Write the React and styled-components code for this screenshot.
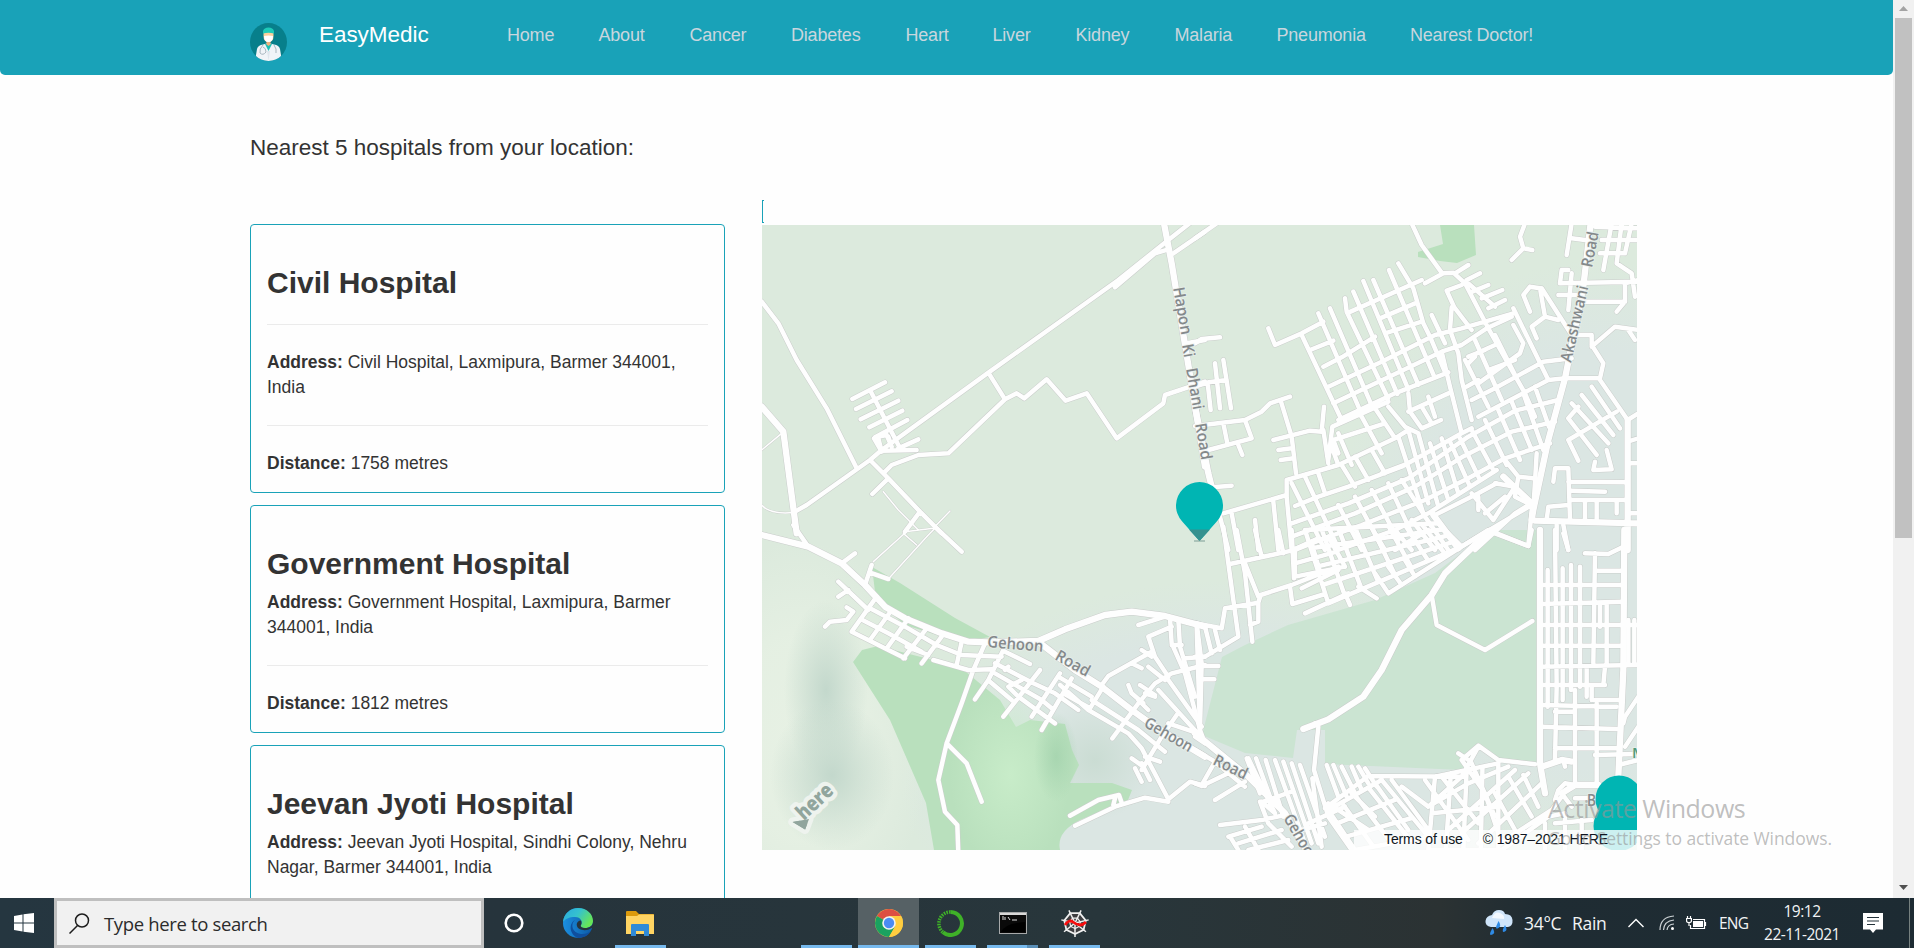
import React from "react";
import styled, { createGlobalStyle } from "styled-components";

const GlobalStyle = createGlobalStyle`
  *, *::before, *::after { box-sizing: border-box; }
  html, body { margin: 0; padding: 0; }
  body { background: #fff; overflow: hidden; }
`;

const SANS = `"Liberation Sans", Arial, sans-serif`;
const SYSTEM = `"Open Sans", "Noto Sans", sans-serif`;
const TEAL = "#19a2b8";

const Screen = styled.div`
  position: relative;
  display: flex;
  flex-direction: column;
  width: 1914px;
  height: 948px;
  overflow: hidden;
  font-family: ${SANS};
  color: #333;
`;

const Viewport = styled.div`
  display: flex;
  flex: 1;
  min-height: 0;
`;

const Page = styled.div`
  flex: 1;
  min-width: 0;
  overflow: hidden;
  background: #fefefe;
`;

const Navbar = styled.nav`
  display: flex;
  align-items: flex-start;
  height: 75px;
  padding-left: 250px;
  background: ${TEAL};
  border-radius: 0 0 5px 5px;
`;

const Logo = styled.svg`
  width: 37px;
  height: 38px;
  margin-top: 23px;
`;

const Brand = styled.span`
  width: 188px;
  margin: 22px 0 0 32px;
  font-size: 22.5px;
  line-height: 26px;
  letter-spacing: -0.05px;
  color: #fff;
`;

const NavLinks = styled.div`
  display: flex;
  margin-top: 25px;
`;

const NavLink = styled.a`
  flex: none;
  width: ${(p) => p.$width}px;
  font-size: 18px;
  line-height: 21px;
  letter-spacing: -0.2px;
  white-space: nowrap;
  color: #c9d6de;
`;

const Heading = styled.h4`
  margin: 59px 0 0 250px;
  font-size: 22.5px;
  font-weight: 400;
  line-height: 28px;
`;

const Columns = styled.div`
  display: flex;
  align-items: flex-start;
  gap: 37px;
  margin: 38px 0 0 250px;
`;

const CardList = styled.div`
  display: flex;
  flex-direction: column;
  gap: 12px;
  width: 475px;
  margin-top: 24px;
`;

const Card = styled.article`
  padding: 40px 16px 16px;
  border: 1px solid ${TEAL};
  border-radius: 4px;
`;

const CardTitle = styled.h3`
  margin: 0 0 ${(p) => (p.$ruled ? 24 : 9)}px;
  font-size: 30px;
  font-weight: 700;
  line-height: 35px;
`;

const Rule = styled.hr`
  height: 1px;
  margin: ${(p) => (p.$first ? 0 : 25)}px 0 25px;
  border: 0;
  background: #ebebeb;
`;

const CardText = styled.p`
  margin: 0;
  font-size: 17.5px;
  line-height: 25px;
`;

const MapColumn = styled.div`
  display: flex;
  flex-direction: column;
  gap: 2px;
  width: 875px;
`;

const EmptyPanel = styled.div`
  width: 2px;
  height: 23px;
  border: 1px solid ${TEAL};
  border-right: 0;
`;

const MapFrame = styled.div`
  position: relative;
  width: 875px;
  height: 625px;
  overflow: hidden;

  > svg { display: block; }
`;

const MapCredits = styled.div`
  position: absolute;
  right: 0;
  bottom: 0;
  display: flex;
  gap: 20px;
  width: 283px;
  height: 20px;
  padding-left: 30px;
  background: rgba(255, 255, 255, 0.8);
  font-size: 14px;
  line-height: 19px;
  letter-spacing: -0.12px;
  white-space: nowrap;
  color: #0f1621;
`;

const ScrollTrack = styled.div`
  display: flex;
  flex-direction: column;
  justify-content: space-between;
  align-items: center;
  width: 21px;
  background: #f1f1f1;

  > svg { flex: none; display: block; }
`;

const ScrollThumb = styled.div`
  width: 17px;
  height: 520px;
  margin-bottom: auto;
  background: #c1c1c1;
`;

const Watermark = styled.div`
  position: absolute;
  left: 1548px;
  top: 791px;
  font-family: ${SYSTEM};
  white-space: nowrap;
  color: rgba(150, 150, 150, 0.62);
`;

const WatermarkTitle = styled.div`
  font-size: 25px;
  line-height: 35px;
  letter-spacing: -0.5px;
`;

const WatermarkNote = styled.div`
  font-size: 17.5px;
  line-height: 25px;
  letter-spacing: -0.08px;
`;

const Taskbar = styled.footer`
  display: flex;
  align-items: stretch;
  height: 50px;
  flex: none;
  background: linear-gradient(90deg, #253640 0, #26343c 500px, #28363b 1100px, #2b3233 1440px, #1f2c33 1540px, #1d2b33 100%);
  font-family: ${SYSTEM};
  color: #f2f4f5;
`;

const StartButton = styled.div`
  display: flex;
  align-items: center;
  width: 54px;
  padding-left: 14px;
`;

const SearchBox = styled.div`
  display: flex;
  align-items: center;
  gap: 14px;
  width: 430px;
  padding-left: 12px;
  border: 3px solid #bfbfbf;
  background: #f1f1f1;
  font-size: 18.5px;
  letter-spacing: -0.35px;
  color: #2b2b2b;
`;

const TaskButton = styled.div`
  display: flex;
  align-items: center;
  justify-content: center;
  width: ${(p) => p.$width}px;
  margin-left: ${(p) => p.$gap || 0}px;
  padding-top: 3px;
  background: ${(p) => (p.$active ? "#566165" : "transparent")};
  border-bottom: 3px solid ${(p) => (p.$open ? "#76b9ed" : "transparent")};
  ${(p) => p.$stacked && "border-image: linear-gradient(90deg, #76b9ed 40px, #5a8fb8 40px) 0 0 3 0;"}
`;

const Tray = styled.div`
  display: flex;
  align-items: center;
  margin-left: auto;
`;

const TrayItem = styled.div`
  display: flex;
  align-items: center;
  width: ${(p) => p.$width}px;
  font-size: ${(p) => p.$size || 16}px;
  letter-spacing: ${(p) => p.$track || 0}px;
  white-space: nowrap;
`;

const Clock = styled.div`
  width: 106px;
  padding-right: 16px;
  font-size: 15.5px;
  line-height: 23px;
  letter-spacing: -0.5px;
  text-align: center;
`;

const ShowDesktop = styled.div`
  width: 5px;
  height: 50px;
  border-left: 1px solid #76807f;
`;

/* Builds a street grid inside a quadrilateral given clockwise from its top left corner. */
const grid = ([a, b, c, d], rows, cols) => {
  const mix = (p, q, t) => [p[0] + (q[0] - p[0]) * t, p[1] + (q[1] - p[1]) * t];
  const seg = (p, q) => `M${p.map((n) => n.toFixed(1))}L${q.map((n) => n.toFixed(1))}`;
  let out = "";
  for (let i = 0; i < rows; i += 1) {
    const t = rows > 1 ? i / (rows - 1) : 0;
    out += seg(mix(a, d, t), mix(b, c, t));
  }
  for (let i = 0; i < cols; i += 1) {
    const t = cols > 1 ? i / (cols - 1) : 0;
    out += seg(mix(a, b, t), mix(d, c, t));
  }
  return out;
};

const SECTORS = [
  {
    id: "northwest",
    at: [755, 190],
    wide: "M20 650L85 725L125 1030M1225 90L1250 220L1350 830",
    streets: `M20 335L70 400L125 510L215 655L305 835M120 965L155 945L345 810L380 780L700 548L1090 270L1240 150L1310 95
      M1080 292L1200 190L1240 178M1255 190L1350 125M700 548L750 628L580 790L490 795L410 825L385 850
      M750 628L785 610L808 625L875 568L932 632L995 610L1085 745L1225 640L1230 615L1350 575
      M345 810L400 865L495 965L560 1030M400 865L352 912M495 965L450 1025M1295 460L1350 450
      M345 600L435 775M292 627L390 577M303 657L410 604M317 688L430 632M343 712L442 662M360 742L457 690M370 745L380 785M357 745L380 785M400 740L410 770
      M430 775L490 748M380 782L485 780M360 742L395 735L410 770`,
    thin: "M20 780L80 730M20 945Q45 975 120 967M385 905L430 960L490 1020M585 963L535 1015L450 1025",
  },
  {
    id: "northeast",
    at: [1195, 220],
    wide: `M1188 0L1165 200L1110 475L1060 660L1015 870L1010 900M1020 902L1330 910M715 885L790 985M925 770L1010 850M0 560L40 760L50 800
      M1298 600L1298 990`,
    streets: `M0 55L65 10M650 10L680 75L740 158M690 190L745 160L775 158L810 190L880 325L990 520L1020 590
      M780 160L820 135M815 180L855 160M832 215L880 195M860 235L922 210M880 265L930 240M820 190L900 260
      M755 212L800 195M755 212L778 262L830 330M770 262L765 330L790 400L800 480L830 600
      M220 325L240 375L320 340L385 305
      M320 345L440 600M370 280L495 571M405 265L530 556M450 235L455 275L579 535M475 215L607 522M505 183L640 508M535 180L670 494M582 150L719 473M610 130L655 205L685 310L705 350L751 459M710 285L750 370
      M460 278L680 180M555 295L660 250M570 340L680 305M345 390L415 362M385 440L440 412L540 350M400 500L560 425L720 345L800 325L955 280M415 550L600 462L740 395L800 375L875 325L950 290M430 600L600 520L760 457
      M955 265L1060 480M820 410L870 390M845 400L900 375M840 360L920 540M810 420L840 480L880 560M850 490L975 400L985 370L955 315M900 345L965 475
      M830 540L900 505L1045 425L1130 415M850 590L1060 480L1110 475M815 500L850 480M820 430L840 410M800 640L830 625M880 450L960 420
      M740 395L765 500L800 640M640 575L760 520M640 520L645 575L680 625L738 600M580 560L630 620L670 640M680 560L710 610M700 530L720 590
      M1005 200L985 225L1005 275M1005 200L1035 205L1050 290L1010 320L1025 355M1040 205L1130 345M1050 290L1090 300
      M950 120L985 85L975 50L990 10M985 85L1012 90
      M1130 10L1115 105M1130 55L1170 60M1100 150L1095 190L1330 185M1100 150L1120 150M1130 160L1120 270M1090 225L1150 225M1170 245L1290 245L1290 190L1330 180
      M1220 60L1330 60M1215 100L1290 100M1250 10L1225 150M1280 10L1265 130L1310 160L1320 230M1310 10L1290 100M1200 20L1330 25M1290 245L1265 275
      M1130 345L1190 345L1190 380L1260 320L1330 330M1190 375L1225 430L1215 475L1110 475M1215 480L1298 600L1330 580M1300 330L1320 360
      M1130 550L1240 670M1160 525L1255 645M1190 500L1275 625M1120 595L1205 705M1120 660L1150 722M1120 660L1265 575M1120 595L1150 560M1195 750L1250 748L1235 690M1200 725L1195 750M1298 665L1330 655
      M1075 785L1080 745L1120 745L1125 900M1120 785L1298 787M1130 812L1230 815M1055 900L1060 860L1120 855M1130 840L1298 840M1170 840L1170 900M1205 845L1205 900M1265 840L1265 880
      M1085 915L1085 990M1105 915L1120 990M1300 880L1330 880M1300 730L1330 730
      M0 370L20 357L75 352M0 500L40 487L95 480M60 430L75 565M85 420L108 565M38 490L47 570M0 618L150 600L200 575L225 550L285 530
      M150 600L170 655L40 690M85 610L97 670M130 675L142 705M258 545L290 650L303 760M235 660L345 632L380 635L387 560M385 630L400 730M250 690L290 685M257 720L295 715
      M50 802L110 797M85 880L275 825M275 780L275 830L290 990M275 780L430 735L600 655L640 630M235 845L250 990M75 890L100 990M110 880L130 990M180 900L190 990
      M400 720L412 620L580 545M430 700L415 660L570 610M430 640L470 735M500 590L560 700M540 565L600 655M410 680L430 735
      M800 640L620 740L460 800L370 830L300 858M1090 540L960 572L820 650L640 775L460 850L290 910M1080 605L950 635L800 712L660 800L480 880L290 950
      M1065 670L930 715L820 775L690 840L500 915L290 990M905 750L700 880L600 930L430 990M600 990L700 930M1025 700L1015 870M970 770L1015 775
      M1020 500L1062 620M985 520L1045 690M950 545L1010 690M910 570L975 720M870 600L935 735M830 630L895 750M795 655L855 780M765 665L825 800M740 655L790 820M705 670L760 840M670 640L730 860M640 630L700 850M610 650L685 880
      M440 735L480 800M480 710L520 780M530 690L570 760M290 790L390 990M330 770L430 985M370 760L390 820M430 855L500 990M480 830L560 980M530 810L610 960M580 790L650 940M620 780L710 920M560 760L640 730
      M790 985L1010 855M720 885L850 820L905 790M830 820L895 900M850 870L850 830M895 900L960 800L900 790M870 880L930 830M900 940L1000 978L1010 870M930 720L970 770L960 830L1000 850M840 990L960 880L1010 850
      M650 900L720 990M690 890L760 990M600 930L650 990M540 940L570 990`,
    thin: "",
  },
  {
    id: "southwest",
    at: [755, 530],
    wide: "M20 15L160 50L260 100L330 165L390 230L450 265L560 310L640 335L700 337L850 333L930 298L1050 255L1130 245L1230 258L1350 290M850 335L960 420L1040 470L1130 540L1200 590L1350 680",
    streets: `M115 -15L160 50M260 100L300 70M330 165L350 105M345 128L400 147M545 -5L620 65M250 155L340 240M250 200L280 180
      M210 290L225 275L275 270L295 245L275 232M345 235L450 290L545 345L620 375L740 380M318 268L400 310L500 365M290 305L450 385M535 390L640 420L710 418
      M365 200L290 305M410 240L345 330M460 265L395 355M515 295L445 385M560 320L500 400M620 335L605 405M690 340L655 420M745 360L700 450L660 508
      M655 420L620 520L575 640L550 750L570 845L607 885L610 970M575 640L635 700L680 815M455 350L520 375
      M750 365L825 402M720 400L835 460L900 490L970 540M720 430L860 510L890 535M705 455L770 510M855 420L745 560M915 430L830 560M950 445L860 600M760 410L750 420M800 450L760 470L790 500L900 580
      M910 440L1010 500M915 465L1000 540L1120 610L1160 655L1240 808M925 490L1005 535M1005 535L1045 470M1010 510L1150 600L1230 665M1240 808L1305 755L1350 768M1240 815L1170 803L1080 830L960 887
      M945 857L1030 810L1092 795L1100 818M1080 805L1075 825M1072 625L1150 520L1200 460L1250 430L1350 405M1040 465L1060 438L1190 365M1150 285L1230 260
      M1250 290L1180 320L1200 380L1240 440M1245 265L1250 340L1290 430L1335 600M1270 270L1275 350L1320 500M1325 280L1340 400L1335 600L1350 640M1210 480L1330 612M1240 450L1340 590M1150 510L1180 540M1170 490L1200 500
      M1290 385L1350 380M1130 400L1160 415M1160 360L1190 380M1180 410L1230 450M1120 465L1130 490L1165 520M1155 465L1200 495M1250 345L1280 345M1220 620L1265 555M1240 580L1330 610M1220 620L1160 720M1130 685L1165 710M1140 715L1160 755M1160 700L1185 750
      M1130 540L1220 600M1170 680L1215 695M1320 620L1350 640`,
    thin: "M355 95L460 0M400 147L520 15L540 -5M445 10L485 45",
  },
  {
    id: "southeast",
    at: [1195, 530],
    wide: "M1035 0L1035 700L1050 790M1288 0L1285 420L1270 740M0 610L160 740L270 850L340 970M1040 710L1100 690L1130 695M1100 790L1140 765L1210 765M890 0L850 35L750 130L710 195L620 300L560 420L505 500L400 568L325 597",
    streets: `M0 280L80 295L90 235L190 218L197 195L290 165L430 110M85 -10L130 320L30 380L0 380M125 0L150 130L172 335M150 100L190 200M180 0L200 80M250 0L265 70M105 102L290 62L370 25M290 0L297 145
      M285 170L292 222L390 192M330 250L460 190M190 218L190 275L165 285M60 300L75 360M30 290L50 370M5 290L15 600M20 408L70 408M20 448L58 448M0 660L60 695L20 765M60 695L150 770M60 810L150 755M0 760L20 768L120 720
      M710 195L725 285L870 360L1012 273M905 10L1000 48L1010 0M360 580L370 590L357 720L400 860L470 960M352 745L380 950
      ${grid([[330, 0], [730, -20], [800, 50], [400, 220]], 5, 9)}
      ${grid([[300, 60], [400, 20], [450, 110], [300, 140]], 3, 3)}
      M320 175L430 120M400 220L800 50L880 0M490 170L545 205M450 190L465 225M580 190L800 50M540 130L580 190M580 110L620 165M630 90L660 140
      M1058 120L1058 530M1080 0L1085 470L1080 690M1103 115L1103 510M1128 105L1128 480M1155 110L1155 470M1200 70L1195 400M1105 10L1120 60M1170 70L1240 72L1285 50M1200 122L1285 122
      M1035 165L1285 165M1035 222L1285 215M1035 285L1330 285M1035 347L1285 347M1035 410L1330 405M1035 465L1230 465M1035 525L1265 530M1035 590L1265 597M1080 655L1265 655M1200 675L1320 672M1140 480L1140 760M1205 520L1205 760M1080 545L1140 545M1175 410L1175 500M1190 470L1190 510M1230 410L1225 465M1235 220L1235 400M1215 220L1215 290
      M1200 510L1275 510M1330 500L1290 560L1285 580M1330 590L1290 650M1270 705L1330 690M1105 690L1110 710M1300 270L1300 400M1318 270L1318 400
      M155 685L195 790M183 685L225 800M212 690L265 860M240 690L330 940M265 695L350 940M290 700L370 940M315 705L390 920M160 685L240 850M205 815L290 785
      M395 705L430 800M415 705L455 800M440 710L480 790M470 710L500 780M490 710L520 760M510 715L545 770
      M390 835L520 738L810 740M800 690L850 647L910 690L1020 703M800 690L870 790L920 940M850 650L800 740L700 830M790 670L820 690
      ${grid([[400, 840], [560, 750], [700, 920], [480, 960]], 4, 5)}
      ${grid([[720, 740], [910, 700], [910, 960], [700, 960]], 3, 5)}
      M540 760L640 900M590 750L700 900M620 770L700 830L820 760L940 710M740 740L850 880M690 750L820 930M830 700L900 860M760 900L960 720M800 910L1000 730M850 940L1040 760M930 930L1070 840L1100 800
      M900 790L960 900M940 740L1010 860M985 735L1030 830M920 960L1060 860L1110 850L1110 960M1080 880L1190 870M1050 880L1050 960M1160 870L1160 960M1080 810L1090 780L1110 760L1140 765M1140 805L1200 805M1100 790L1130 830
      M75 885L200 870L270 855M195 815L220 880L290 950M100 920L200 890M150 890L190 960M105 920L130 960M130 940L260 900M160 960L280 930M390 880L320 900M200 815L240 850M400 820L520 900M340 880L450 830M470 790L540 860`,
    thin: "",
  },
];

const LABELS = [
  ["Hapon", 1173, 288, 80, 48],
  ["Ki", 1182, 345, 80, 13],
  ["Dhani", 1186, 369, 80, 42],
  ["Road", 1195, 424, 80, 37],
  ["Akashwani", 1571, 363, -77, 78],
  ["Road", 1592, 268, -79, 36],
  ["Gehoon", 987, 647, 5, 56],
  ["Road", 1054, 659, 29, 37],
  ["Gehoon", 1143, 726, 30, 53],
  ["Road", 1212, 764, 26, 36],
  ["Gehoon", 1283, 818, 60, 54],
  ["B", 1587, 806, 0, 9],
];

const LAYERS = [
  { key: "edge", color: "#cacdcb", wide: 22, street: 16.5, thin: 7 },
  { key: "fill", color: "#fefefe", wide: 19, street: 13.5, thin: 4.5 },
];

function StreetMap() {
  return (
    <svg width="875" height="625" viewBox="762 225 875 625">
      <defs>
        <radialGradient id="shade">
          <stop offset="0" stopColor="#c3d8cc" />
          <stop offset="1" stopColor="#c3d8cc" stopOpacity="0" />
        </radialGradient>
        <radialGradient id="light">
          <stop offset="0" stopColor="#e7f1e4" />
          <stop offset=".5" stopColor="#e7f1e4" stopOpacity=".8" />
          <stop offset="1" stopColor="#e7f1e4" stopOpacity="0" />
        </radialGradient>
        <radialGradient id="town">
          <stop offset="0" stopColor="#dbe6e3" />
          <stop offset="0.7" stopColor="#dbe6e3" />
          <stop offset="1" stopColor="#dbe6e3" stopOpacity="0" />
        </radialGradient>
        <radialGradient id="glow">
          <stop offset="0" stopColor="#c8ecc9" />
          <stop offset="1" stopColor="#c8ecc9" stopOpacity="0" />
        </radialGradient>
        <radialGradient id="deep">
          <stop offset="0" stopColor="#9fd0aa" />
          <stop offset="1" stopColor="#9fd0aa" stopOpacity="0" />
        </radialGradient>
      </defs>
      <rect x="762" y="225" width="875" height="625" fill="#dceadd" />
      <ellipse cx="1600" cy="560" rx="270" ry="300" fill="url(#town)" />
      <ellipse cx="1230" cy="780" rx="330" ry="200" fill="url(#town)" />
      <ellipse cx="800" cy="740" rx="130" ry="200" fill="url(#light)" />
      <ellipse cx="826" cy="690" rx="42" ry="90" fill="url(#shade)" />
      <ellipse cx="832" cy="775" rx="62" ry="75" fill="url(#shade)" />
      <ellipse cx="1095" cy="760" rx="60" ry="60" fill="url(#shade)" opacity=".7" />
      <g fill="#b9e0bd">
        <path d="M1440 225H1474L1476 255L1457 263L1440 261L1418 257V252L1443 244Z" />
        <path d="M872 567L900 583L955 618L990 637L960 642L905 625L876 600Z" />
        <path d="M862 650L878 646L960 667L1000 700L1016 727L1030 720L1065 724L1072 750L1079 765L1070 783L1112 783L1132 790L1128 800L1080 820Q1056 832 1060 850L934 850L926 803L890 720L853 662Z" />
      </g>
      <ellipse cx="1010" cy="775" rx="60" ry="95" fill="url(#glow)" />
      <ellipse cx="1056" cy="757" rx="22" ry="45" fill="url(#deep)" opacity=".7" />
      <path
        d="M1245 645L1288 625L1375 600L1435 573L1492 530L1537 530V763L1500 760L1478 745L1462 770L1325 764V730H1297L1293 758L1245 753L1202 735L1222 657Z"
        fill="#cbe4d2"
      />
      {LAYERS.map((layer) => (
        <g key={layer.key} fill="none" stroke={layer.color} strokeLinecap="round" strokeLinejoin="round">
          {SECTORS.map((s) => (
            <g key={s.id} transform={`translate(${s.at[0]} ${s.at[1]}) scale(.33333)`}>
              <path d={s.thin} strokeWidth={layer.thin} />
              <path d={s.streets} strokeWidth={layer.street} />
              <path d={s.wide} strokeWidth={layer.wide} />
            </g>
          ))}
        </g>
      ))}
      <g fontFamily={SYSTEM} fontSize="16" fill="#84898b" stroke="#e9efec" strokeWidth="2" strokeOpacity=".7" paintOrder="stroke" fontWeight="600">
        {LABELS.map(([text, x, y, turn, length]) => (
          <text key={`${text}${x}`} transform={`translate(${x} ${y}) rotate(${turn})`} textLength={length} lengthAdjust="spacingAndGlyphs">
            {text}
          </text>
        ))}
        <text x="1632" y="758" fontSize="15" fill="#4f9a78">M</text>
      </g>
      <g transform="translate(804 821) rotate(-43)" stroke="#eef3ee" strokeWidth="9" strokeLinejoin="round" paintOrder="stroke">
        <path d="M-9 -7L5 2L-5 7Z" fill="#91a59d" />
        <text x="0" y="0" fontFamily={SYSTEM} fontWeight="800" fontSize="21" textLength="42" lengthAdjust="spacingAndGlyphs" fill="#91a59d">here</text>
        <path d="M-9 -7L5 2L-5 7Z" fill="#91a59d" stroke="none" />
      </g>
      <path d="M1199.500 541L1182 521.300A23.500 23.500 0 1 1 1217 521.300Z" fill="#00b5b3" />
      <path d="M1189 529.500H1210L1199.500 541Z" fill="#35918f" />
      <path d="M1194 541H1205" stroke="#7d9d95" strokeWidth="1" />
      <circle cx="1619" cy="799" r="23.500" fill="#00b5b3" />
      <circle cx="1618.500" cy="826" r="25" fill="#00b5b3" />
    </svg>
  );
}

function DoctorLogo() {
  return (
    <Logo viewBox="0 0 37 38">
      <defs>
        <clipPath id="badge"><ellipse cx="18.500" cy="19" rx="18.500" ry="19" /></clipPath>
      </defs>
      <g clipPath="url(#badge)">
        <rect width="37" height="38" fill="#077f8b" />
        <path d="M5 38L7 26Q8 22 13 21.500L18.500 20L24 21.500Q29 22 30 26L32 38Z" fill="#f1f4f8" />
        <path d="M15 21L18.500 28L22 21Z" fill="#1fc0b4" />
        <path d="M16.500 17H20.500V21.500L18.500 23L16.500 21.500Z" fill="#efb27c" />
        <path d="M13.500 9H23.500V13Q23.500 19 18.500 19T13.500 13Z" fill="#fcd09c" />
        <path d="M14 13Q18.500 12 23 13Q23 19 18.500 19T14 13Z" fill="#fff" />
        <path d="M13 10.500V8Q14 4.500 18.500 4.500T24 8V10.500Q18.500 9 13 10.500Z" fill="#1ecab8" />
        <path d="M13 22Q9 26 10 30Q13 33 16 29Q16 25 13 24M24 22Q27 26 26 30" fill="none" stroke="#a9b6bf" strokeWidth="1" />
        <path d="M17 28L18.500 38L20 28Z" fill="#dfe5ec" />
      </g>
    </Logo>
  );
}

const NAV = [
  ["Home", 91.5], ["About", 91], ["Cancer", 101.5], ["Diabetes", 114.5], ["Heart", 87],
  ["Liver", 83], ["Kidney", 99], ["Malaria", 102], ["Pneumonia", 133.5], ["Nearest Doctor!", 130],
];

const HOSPITALS = [
  { name: "Civil Hospital", address: "Civil Hospital, Laxmipura, Barmer 344001, India", metres: 1758, ruled: true },
  { name: "Government Hospital", address: "Government Hospital, Laxmipura, Barmer 344001, India", metres: 1812 },
  { name: "Jeevan Jyoti Hospital", address: "Jeevan Jyoti Hospital, Sindhi Colony, Nehru Nagar, Barmer 344001, India" },
];

function EdgeIcon() {
  return (
    <svg width="30" height="30" viewBox="0 0 30 30">
      <defs>
        <linearGradient id="edgeTop" x1="0" x2="1" y1="0" y2=".5">
          <stop offset="0" stopColor="#2aa9dd" /><stop offset=".5" stopColor="#35c1cf" /><stop offset="1" stopColor="#66e558" />
        </linearGradient>
        <linearGradient id="edgeLow" x1="0" x2="1"><stop offset="0" stopColor="#1b8fe0" /><stop offset="1" stopColor="#0c59a4" /></linearGradient>
      </defs>
      <circle cx="15" cy="15" r="15" fill="url(#edgeLow)" />
      <path d="M0 14C1 5 8 0 15 0C24 0 30 6 30 13C30 18 26 20 22 20C18 20 17 18 18 17C20 14 18 9 12 9C6 9 2 11 0 14Z" fill="url(#edgeTop)" />
      <path d="M12 12C7 16 9 25 18 26C22 26.500 25 25 28 23C25 28 20 30 15 30C7 27 5 16 12 12Z" fill="#0f4f9e" />
      <path d="M18 12.500C15 12.500 13 15 14 18C15 22 23 24 28.500 20L31 22L30 14C30 18 26 20 22 20C18 20 17 18 18 17Q19 15 18 12.500Z" fill="#26343c" />
    </svg>
  );
}

function ChromeIcon() {
  return (
    <svg width="28" height="28" viewBox="0 0 28 28">
      <circle cx="14" cy="14" r="14" fill="#ffcd40" />
      <path d="M14 14L1.900 7A14 14 0 0 1 26.100 7H14Z" fill="#dd4f43" />
      <path d="M14 14L1.900 7A14 14 0 0 0 14 28L20 17.500Z" fill="#1aa260" />
      <path d="M14 7H26.100A14 14 0 0 1 14 28L20.100 17.500Z" fill="#ffcd40" />
      <circle cx="14" cy="14" r="6.800" fill="#f2f2f2" />
      <circle cx="14" cy="14" r="5.200" fill="#4b8bf4" />
    </svg>
  );
}

function SpyderIcon() {
  const spokes = [0, 1, 2, 3, 4, 5, 6].map((n) => (n * 2 * Math.PI) / 7 + Math.PI / 2);
  const ring = (r) => spokes.map((a) => `${15 + r * Math.cos(a)},${14 + r * Math.sin(a)}`).join(" ");
  return (
    <svg width="30" height="29" viewBox="0 0 30 29" fill="none" stroke="#f0f0f0">
      <polygon points={ring(11)} strokeWidth="1.800" fill="#3e3e40" />
      <polygon points={ring(5.5)} strokeWidth="1.200" />
      {spokes.map((a) => (
        <path key={a} d={`M15 14L${15 + 14 * Math.cos(a)} ${14 + 14 * Math.sin(a)}`} strokeWidth="1.500" />
      ))}
      <path d="M5 16Q9 10 13 13T20 16T26 13" stroke="#f80d0d" strokeWidth="2.800" />
    </svg>
  );
}

export default function App() {
  return (
    <>
      <GlobalStyle />
      <Screen>
        <Viewport>
          <Page>
            <Navbar>
              <DoctorLogo />
              <Brand>EasyMedic</Brand>
              <NavLinks>
                {NAV.map(([label, width]) => <NavLink key={label} $width={width}>{label}</NavLink>)}
              </NavLinks>
            </Navbar>
            <Heading>Nearest 5 hospitals from your location:</Heading>
            <Columns>
              <CardList>
                {HOSPITALS.map((h) => (
                  <Card key={h.name}>
                    <CardTitle $ruled={h.ruled}>{h.name}</CardTitle>
                    {h.ruled && <Rule $first />}
                    <CardText><b>Address:</b> {h.address}</CardText>
                    <Rule />
                    {h.metres && <CardText><b>Distance:</b> {h.metres} metres</CardText>}
                  </Card>
                ))}
              </CardList>
              <MapColumn>
                <EmptyPanel />
                <MapFrame>
                  <StreetMap />
                  <MapCredits><span>Terms of use</span><span>© 1987–2021 HERE</span></MapCredits>
                </MapFrame>
              </MapColumn>
            </Columns>
          </Page>
          <ScrollTrack>
            <svg width="21" height="18"><path d="M6 11L10.500 6L15 11Z" fill="#a3a3a3" /></svg>
            <ScrollThumb />
            <svg width="21" height="21"><path d="M6 8H15L10.500 13Z" fill="#505050" /></svg>
          </ScrollTrack>
        </Viewport>
        <Taskbar>
          <StartButton>
            <svg width="20" height="20" viewBox="0 0 20 20" fill="#fff">
              <path d="M0 3L8.500 1.500V9.500H0ZM9.500 1.300L20 0V9.500H9.500ZM0 10.500H8.500V18.500L0 17ZM9.500 10.500H20V20L9.500 18.700Z" />
            </svg>
          </StartButton>
          <SearchBox>
            <svg width="21" height="21" viewBox="0 0 21 21" fill="none" stroke="#1d1d1d" strokeWidth="1.500">
              <circle cx="13" cy="7.500" r="6.500" /><path d="M8.500 12.500L.5 20.500" />
            </svg>
            Type here to search
          </SearchBox>
          <TaskButton $width={60}>
            <svg width="20" height="20"><circle cx="10" cy="10" r="8.300" fill="none" stroke="#fff" strokeWidth="2.600" /></svg>
          </TaskButton>
          <TaskButton $width={51} $gap={8}><EdgeIcon /></TaskButton>
          <TaskButton $width={51} $gap={12} $open>
            <svg width="29" height="25" viewBox="0 0 29 25">
              <path d="M0 1Q0 0 1 0H10L13 3H27Q28 3 28 4V10H0Z" fill="#dc9a0c" />
              <path d="M0 5H11L13 3.500H28V23H0Z" fill="#ffd463" />
              <path d="M5 25V14Q5 13 6 13H22Q23 13 23 14V25H18V20H10V25Z" fill="#2f8ad8" />
            </svg>
          </TaskButton>
          <TaskButton $width={51} $gap={135} $open />
          <TaskButton $width={61} $gap={6} $open $active><ChromeIcon /></TaskButton>
          <TaskButton $width={51} $gap={6} $open>
            <svg width="27" height="27" viewBox="0 0 27 27" fill="none" stroke="#3fb128">
              <path d="M13.500 2A11.500 11.500 0 1 1 6 22.300" strokeWidth="4" />
              <path d="M13.500 2A11.500 11.500 0 0 0 6 22.300" strokeWidth="3.500" strokeDasharray="1.600 1" />
            </svg>
          </TaskButton>
          <TaskButton $width={51} $gap={11} $open $stacked>
            <svg width="28" height="22" viewBox="0 0 28 22">
              <rect x=".5" y=".5" width="27" height="21" fill="#0a0a0a" stroke="#a7a9aa" />
              <rect x="1" y="1" width="26" height="2" fill="#d8d8d8" />
              <path d="M3 5h2M3 7h2M6 5v3M9 5l2 3M13 8h5" stroke="#dadada" strokeWidth="1" />
              <path d="M2 20Q6 11 26 10V20Z" fill="#000" />
            </svg>
          </TaskButton>
          <TaskButton $width={51} $gap={11} $open><SpyderIcon /></TaskButton>
          <Tray>
            <TrayItem $width={39}>
              <svg width="28" height="26" viewBox="0 0 28 26">
                <path d="M6 17Q0 16 .5 11T7 5Q9 0 14 0T20 4Q27 4 27.500 10T23 17Z" fill="#cfe5fa" />
                <path d="M7 8Q10 1 15 3T19 9" fill="#f2f8fe" />
                <path d="M7.500 18Q11 23 7.500 24.500T5.500 22ZM13.500 11Q17 16 13.500 18T11.500 15.500ZM20 15Q23 20 20 21.500T18 19Z" fill="#2f8be6" />
              </svg>
            </TrayItem>
            <TrayItem $width={48} $size={17.5} $track={-0.3}>34°C</TrayItem>
            <TrayItem $width={56} $size={17.5} $track={-0.3}>Rain</TrayItem>
            <TrayItem $width={31}>
              <svg width="16" height="10" fill="none" stroke="#fff" strokeWidth="1.400"><path d="M.5 9L8 1.500L15.500 9" /></svg>
            </TrayItem>
            <TrayItem $width={27}>
              <svg width="16" height="16" fill="none" stroke="#cdd3d6" strokeWidth="1.200">
                <path d="M1 15Q1 2 15 1M4.500 15Q5 6 15 5M8 15Q8.500 9.500 15 9" /><circle cx="13.500" cy="13.500" r="1.500" fill="#fff" stroke="none" />
              </svg>
            </TrayItem>
            <TrayItem $width={33}>
              <svg width="21" height="14" fill="none" stroke="#fff" strokeWidth="1.200">
                <path d="M7 3.500H18.500V12.500H4.500V9M19.500 6V10M1.500 0V2M4.500 0V2M.6 2.500H5.400V5Q5.400 6.500 3 6.500T.6 5ZM3 6.500V10" />
                <rect x="7" y="5" width="10" height="6" fill="#fff" stroke="none" />
              </svg>
            </TrayItem>
            <TrayItem $width={38} $size={15.5} $track={-0.8}>ENG</TrayItem>
            <Clock>19:12<br />22-11-2021</Clock>
            <TrayItem $width={46}>
              <svg width="20" height="20" viewBox="0 0 20 20">
                <path d="M0 0H20V16.500H13L10 20L7 16.500H0Z" fill="#fff" />
                <path d="M4 4.500H16M4 8H16M4 11.500H12" stroke="#24323a" strokeWidth="1.200" />
              </svg>
            </TrayItem>
            <ShowDesktop />
          </Tray>
        </Taskbar>
        <Watermark>
          <WatermarkTitle>Activate Windows</WatermarkTitle>
          <WatermarkNote>Go to Settings to activate Windows.</WatermarkNote>
        </Watermark>
      </Screen>
    </>
  );
}
